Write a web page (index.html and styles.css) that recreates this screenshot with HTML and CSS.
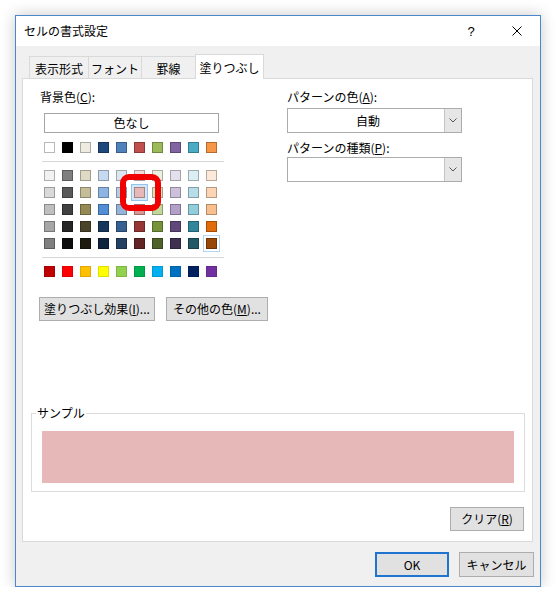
FILE: index.html
```html
<!DOCTYPE html>
<html lang="ja">
<head>
<meta charset="utf-8">
<title>セルの書式設定</title>
<link rel="stylesheet" href="styles.css">
</head>
<body>
<div class="dialog">
  <div class="titlebar">
    <span class="title">セルの書式設定</span>
    <span class="tbtn help">?</span>
    <span class="tbtn close"><svg width="10" height="10" viewBox="0 0 10 10"><path d="M0.5 0.5L9.5 9.5M9.5 0.5L0.5 9.5" stroke="#000" stroke-width="1" fill="none"/></svg></span>
  </div>
  <div class="content">
    <div class="tabs">
      <div class="tab t1">表示形式</div>
      <div class="tab t2">フォント</div>
      <div class="tab t3">罫線</div>
      <div class="tab active">塗りつぶし</div>
    </div>
    <div class="panel">
      <div class="columns">
        <div class="left">
          <div class="label">背景色(<u>C</u>):</div>
          <div class="nocolor">色なし</div>
          <div class="swrow top">
            <span class="sw" style="background:#ffffff"></span>
            <span class="sw" style="background:#000000"></span>
            <span class="sw" style="background:#eeece1"></span>
            <span class="sw" style="background:#1f497d"></span>
            <span class="sw" style="background:#4f81bd"></span>
            <span class="sw" style="background:#c0504d"></span>
            <span class="sw" style="background:#9bbb59"></span>
            <span class="sw" style="background:#8064a2"></span>
            <span class="sw" style="background:#4bacc6"></span>
            <span class="sw" style="background:#f79646"></span>
          </div>
          <div class="sep"></div>
          <div class="theme">
            <span class="sw" style="background:#f2f2f2"></span>
            <span class="sw" style="background:#7f7f7f"></span>
            <span class="sw" style="background:#ddd9c4"></span>
            <span class="sw" style="background:#c5d9f1"></span>
            <span class="sw" style="background:#dce6f1"></span>
            <span class="sw" style="background:#f2dcdb"></span>
            <span class="sw" style="background:#ebf1de"></span>
            <span class="sw" style="background:#e4dfec"></span>
            <span class="sw" style="background:#daeef3"></span>
            <span class="sw" style="background:#fde9d9"></span>

            <span class="sw" style="background:#d9d9d9"></span>
            <span class="sw" style="background:#595959"></span>
            <span class="sw" style="background:#c4bd97"></span>
            <span class="sw" style="background:#8db4e2"></span>
            <span class="sw" style="background:#b8cce4"></span>
            <span class="sw selected" style="background:#e6b8b7"></span>
            <span class="sw" style="background:#d8e4bc"></span>
            <span class="sw" style="background:#ccc0da"></span>
            <span class="sw" style="background:#b7dee8"></span>
            <span class="sw" style="background:#fcd5b4"></span>

            <span class="sw" style="background:#bfbfbf"></span>
            <span class="sw" style="background:#404040"></span>
            <span class="sw" style="background:#948a54"></span>
            <span class="sw" style="background:#538dd5"></span>
            <span class="sw" style="background:#95b3d7"></span>
            <span class="sw" style="background:#da9694"></span>
            <span class="sw" style="background:#c4d79b"></span>
            <span class="sw" style="background:#b1a0c7"></span>
            <span class="sw" style="background:#92cddc"></span>
            <span class="sw" style="background:#fabf8f"></span>

            <span class="sw" style="background:#a6a6a6"></span>
            <span class="sw" style="background:#262626"></span>
            <span class="sw" style="background:#4a452a"></span>
            <span class="sw" style="background:#16365c"></span>
            <span class="sw" style="background:#366092"></span>
            <span class="sw" style="background:#963634"></span>
            <span class="sw" style="background:#76933c"></span>
            <span class="sw" style="background:#60497a"></span>
            <span class="sw" style="background:#31869b"></span>
            <span class="sw" style="background:#e26b0a"></span>

            <span class="sw" style="background:#808080"></span>
            <span class="sw" style="background:#0d0d0d"></span>
            <span class="sw" style="background:#1d1b10"></span>
            <span class="sw" style="background:#0f243e"></span>
            <span class="sw" style="background:#244062"></span>
            <span class="sw" style="background:#632523"></span>
            <span class="sw" style="background:#4f6228"></span>
            <span class="sw" style="background:#403151"></span>
            <span class="sw" style="background:#215967"></span>
            <span class="sw hover" style="background:#974706"></span>
          </div>
          <div class="sep"></div>
          <div class="swrow std">
            <span class="sw" style="background:#c00000"></span>
            <span class="sw" style="background:#ff0000"></span>
            <span class="sw" style="background:#ffc000"></span>
            <span class="sw" style="background:#ffff00"></span>
            <span class="sw" style="background:#92d050"></span>
            <span class="sw" style="background:#00b050"></span>
            <span class="sw" style="background:#00b0f0"></span>
            <span class="sw" style="background:#0070c0"></span>
            <span class="sw" style="background:#002060"></span>
            <span class="sw" style="background:#7030a0"></span>
          </div>
          <div class="btns">
            <button class="btn b-effect">塗りつぶし効果(<u>I</u>)...</button>
            <button class="btn b-more">その他の色(<u>M</u>)...</button>
          </div>
        </div>
        <div class="right">
          <div class="label">パターンの色(<u>A</u>):</div>
          <div class="combo c1"><span class="val">自動</span><span class="arrow"><svg width="8" height="5" viewBox="0 0 8 5"><path d="M0.5 0.5L4 4L7.5 0.5" stroke="#555" stroke-width="1" fill="none"/></svg></span></div>
          <div class="label l2">パターンの種類(<u>P</u>):</div>
          <div class="combo c2"><span class="val"></span><span class="arrow"><svg width="8" height="5" viewBox="0 0 8 5"><path d="M0.5 0.5L4 4L7.5 0.5" stroke="#555" stroke-width="1" fill="none"/></svg></span></div>
        </div>
      </div>
      <fieldset class="sample">
        <legend>サンプル</legend>
        <div class="preview"></div>
      </fieldset>
      <div class="clearrow"><button class="btn b-clear">クリア(<u>R</u>)</button></div>
    </div>
    <div class="footer">
      <button class="btn ok">OK</button>
      <button class="btn cancel">キャンセル</button>
    </div>
  </div>
</div>
</body>
</html>
```
FILE: styles.css
```css
body {
  margin: 0;
  background: #ffffff;
  font-family: "Noto Sans CJK JP", "Noto Sans", sans-serif;
  font-size: 12px;
  color: #000;
}

.dialog {
  margin: 15px 0 0 15px;
  width: 526px;
  height: 572px;
  box-sizing: border-box;
  border: 1px solid #4c87c9;
  background: #f0f0f0;
  box-shadow: 0 0 14px rgba(0, 0, 0, 0.22);
}

.titlebar {
  height: 30px;
  background: #ffffff;
  display: flex;
  align-items: center;
  padding-left: 8px;
}

.title {
  flex: 1;
  line-height: 16px;
}

.tbtn {
  width: 46px;
  height: 30px;
  display: flex;
  align-items: center;
  justify-content: center;
}

.help {
  font-size: 13px;
  font-family: "Liberation Sans", sans-serif;
}

.content {
  padding: 0 7px 0 6px;
}

.tabs {
  display: flex;
  align-items: flex-end;
  height: 24px;
  margin-top: 8px;
  padding-left: 7px;
}

.tab {
  height: 22px;
  box-sizing: border-box;
  border: 1px solid #d9d9d9;
  border-bottom: none;
  margin-left: -1px;
  display: flex;
  justify-content: center;
  align-items: center;
  padding-top: 3px;
  line-height: 14px;
  background: #f0f0f0;
}

.tab.t1 { margin-left: 0; width: 60px; }
.tab.t2 { width: 54px; }
.tab.t3 { width: 55px; }

.tab.active {
  width: 69px;
  height: 25px;
  margin-bottom: -1px;
  padding-top: 1px;
  background: #ffffff;
  position: relative;
  z-index: 1;
}

.panel {
  height: 464px;
  box-sizing: border-box;
  border: 1px solid #d9d9d9;
  background: #ffffff;
}

.columns {
  display: flex;
  padding-top: 10px;
}

.left {
  width: 243px;
  padding-left: 21px;
}

.label {
  line-height: 16px;
  height: 16px;
}

.left .label {
  margin-left: -4px;
}

.nocolor {
  margin-top: 8px;
  width: 175px;
  height: 20px;
  box-sizing: border-box;
  border: 1px solid #a5a5a5;
  text-align: center;
  line-height: 18px;
}

.swrow {
  display: flex;
  gap: 7px;
  margin-top: 9px;
}

.swrow.std {
  margin-top: 8px;
}

.sw {
  display: block;
  width: 11px;
  height: 11px;
  box-sizing: border-box;
  border: 1px solid rgba(0, 0, 0, 0.28);
}

.swrow.std .sw {
  border-color: rgba(0, 0, 0, 0.12);
}

.sep {
  margin: 8px 0 0 -2px;
  width: 182px;
  height: 1px;
  background: #d6d6d6;
}

.theme {
  display: grid;
  grid-template-columns: repeat(10, 11px);
  gap: 6px 7px;
  margin-top: 8px;
}

.sw.selected {
  position: relative;
  box-shadow: 0 0 0 2px #d3e7f8, 0 0 0 3px #92c4ec;
}

.sw.selected::after {
  content: "";
  position: absolute;
  left: -15px;
  top: -14px;
  width: 41px;
  height: 37px;
  box-sizing: border-box;
  border: 6px solid #f00000;
  border-radius: 9px;
}

.sw.hover {
  box-shadow: 0 0 0 2px #ffffff, 0 0 0 3px #b7d7f1;
}

.btns {
  display: flex;
  gap: 11px;
  margin-top: 20px;
  margin-left: -5px;
}

.btn {
  height: 24px;
  box-sizing: border-box;
  border: 1px solid #adadad;
  background: #e1e1e1;
  font-family: inherit;
  font-size: 12px;
  color: #000;
  padding: 0;
  line-height: 20px;
  text-align: center;
}

.b-effect { width: 116px; }
.b-more { width: 102px; }

.right {
  width: 175px;
}

.combo {
  margin-top: 3px;
  height: 25px;
  box-sizing: border-box;
  border: 1px solid #acacac;
  background: #ffffff;
  display: flex;
}

.combo .val {
  flex: 1;
  text-align: center;
  line-height: 23px;
  padding-left: 4px;
}

.combo .arrow {
  width: 17px;
  box-sizing: border-box;
  border-left: 1px solid #c4c4c4;
  background: #e6e6e6;
  display: flex;
  align-items: center;
  justify-content: center;
}

.label.l2 {
  margin-top: 7px;
}

.combo.c2 {
  margin-top: 1px;
}

.sample {
  margin: 85px 7px 0 8px;
  padding: 11px 10px 8px 10px;
  border: 1px solid #dcdcdc;
  min-width: 0;
}

.sample legend {
  padding: 0 1px;
  margin-left: -6px;
  line-height: 14px;
}

.preview {
  height: 52px;
  background: #e6b8b7;
}

.clearrow {
  display: flex;
  justify-content: flex-end;
  margin-top: 15px;
  padding-right: 8px;
}

.b-clear { width: 74px; }

.footer {
  display: flex;
  justify-content: flex-end;
  gap: 10px;
  margin-top: 10px;
  margin-right: -1px;
}

.ok {
  width: 74px;
  height: 25px;
  border: 2px solid #1f74cf;
}

.cancel {
  width: 75px;
  height: 25px;
}
```
